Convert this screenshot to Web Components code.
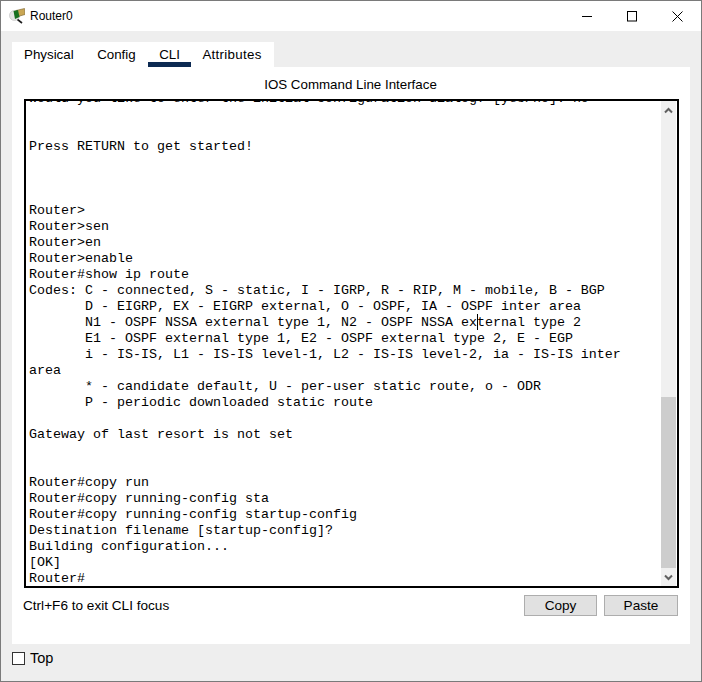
<!DOCTYPE html>
<html>
<head>
<meta charset="utf-8">
<title>Router0</title>
<style>
html, body { margin: 0; height: 100%; }
body { font-family: "Liberation Sans", Arial, sans-serif; overflow: hidden; }
</style>
</head>
<body>
<device-window title="Router0">
  <tab-bar active="CLI" tabs="Physical,Config,CLI,Attributes"></tab-bar>
  <cli-panel></cli-panel>
</device-window>
<script>
class WindowControls extends HTMLElement {
    constructor() {
        super();
        this.attachShadow({ mode: "open" }).innerHTML = `
            <style>
                :host { display: flex; margin-left: auto; margin-right: 18px; align-items: center; gap: 35px; }
                svg { display: block; }
            </style>
            <svg width="10" height="11" viewBox="0 0 10 11"><path d="M0 5.5H10" stroke="#000" fill="none"/></svg>
            <svg width="10" height="11" viewBox="0 0 10 11"><rect x=".5" y=".5" width="9" height="9.5" stroke="#000" fill="none"/></svg>
            <svg width="11" height="11" viewBox="0 0 11 11"><path d="M.5 .5L10.5 10.5M10.5 .5L.5 10.5" stroke="#000" fill="none" stroke-width="1"/></svg>
        `;
    }
}
customElements.define("window-controls", WindowControls);

class DeviceWindow extends HTMLElement {
    constructor() {
        super();
        this.root = this.attachShadow({ mode: "open" });
        this.root.innerHTML = `
            <style>
                :host { display: flex; flex-direction: column; box-sizing: border-box; width: 702px; height: 682px; border: 1px solid #7a7a7a; background: #eee; }
                #title { display: flex; align-items: center; height: 30px; background: #fff; padding-left: 8px; font-size: 12px; color: #000; flex: none; }
                #title svg.logo { margin-right: 5px; }
                #body { flex: none; padding: 11px 11px 0 11px; }
                #foot { display: flex; align-items: center; gap: 5px; padding: 8px 0 0 11px; font-size: 14.5px; line-height: 13px; color: #000; }
                #box { width: 11px; height: 11px; border: 1px solid #333; background: #fff; }
            </style>
            <div id="title">
                <svg class="logo" width="16" height="16" viewBox="0 0 16 16">
                    <circle cx="5.5" cy="7.5" r="5" fill="#e6e6e6" stroke="#c4c4c4" stroke-width=".7"/>
                    <path d="M8.5 11.5L13 15" stroke="#1c1c1c" stroke-width="1.6"/>
                    <path d="M7 2.5L15.5 .5L16 6.5L9 8.5z" fill="#c9a654" stroke="#77602c" stroke-width=".6"/>
                    <path d="M4.5 3L9 2L10.5 9L6 11z" fill="#17701f"/>
                </svg>
                <span class="t"></span>
            </div>
            <div id="body"><slot></slot></div>
            <div id="foot"><span id="box"></span><span>Top</span></div>
        `;
    }
    connectedCallback() {
        this.root.querySelector(".t").textContent = this.getAttribute("title");
        this.root.querySelector("#title").appendChild(document.createElement("window-controls"));
    }
}
customElements.define("device-window", DeviceWindow);

class TabBar extends HTMLElement {
    constructor() {
        super();
        this.root = this.attachShadow({ mode: "open" });
    }
    connectedCallback() {
        var active = this.getAttribute("active");
        var tabs = this.getAttribute("tabs").split(",");
        this.root.innerHTML = `
            <style>
                :host { display: flex; width: max-content; height: 25px; background: #fff; padding: 0 12px; gap: 23.5px; font-size: 13.33px; color: #000; }
                div { position: relative; line-height: 25px; }
                div:last-child { letter-spacing: .3px; margin-left: -1px; }
                div.on::after { content: ""; position: absolute; left: -11.5px; right: -11px; bottom: 0; height: 5px; background: #0c2a52; }
            </style>
            ${tabs.map(t => `<div class="${t == active ? "on" : ""}">${t}</div>`).join("")}
        `;
    }
}
customElements.define("tab-bar", TabBar);

class TermScroll extends HTMLElement {
    constructor() {
        super();
        this.attachShadow({ mode: "open" }).innerHTML = `
            <style>
                :host { display: flex; flex-direction: column; flex: none; width: 15px; margin-right: 1px; background: #f0f0f0; }
                .arrow { height: 18px; flex: none; display: flex; align-items: center; justify-content: center; }
                #track { flex: 1; display: flex; flex-direction: column; justify-content: flex-end; }
                #thumb { height: 171px; background: #cdcdcd; }
            </style>
            <div class="arrow"><svg width="9" height="7" viewBox="0 0 9 7"><path d="M1 5.5L4.5 2L8 5.5" stroke="#606060" stroke-width="2" fill="none"/></svg></div>
            <div id="track"><div id="thumb"></div></div>
            <div class="arrow"><svg width="9" height="7" viewBox="0 0 9 7"><path d="M1 1.5L4.5 5L8 1.5" stroke="#606060" stroke-width="2" fill="none"/></svg></div>
        `;
    }
}
customElements.define("term-scroll", TermScroll);

var TERMINAL_LINES = [
    "Would you like to enter the initial configuration dialog? [yes/no]: no",
    "", "",
    "Press RETURN to get started!",
    "", "", "",
    "Router>",
    "Router>sen",
    "Router>en",
    "Router>enable",
    "Router#show ip route",
    "Codes: C - connected, S - static, I - IGRP, R - RIP, M - mobile, B - BGP",
    "       D - EIGRP, EX - EIGRP external, O - OSPF, IA - OSPF inter area",
    "       N1 - OSPF NSSA external type 1, N2 - OSPF NSSA external type 2",
    "       E1 - OSPF external type 1, E2 - OSPF external type 2, E - EGP",
    "       i - IS-IS, L1 - IS-IS level-1, L2 - IS-IS level-2, ia - IS-IS inter",
    "area",
    "       * - candidate default, U - per-user static route, o - ODR",
    "       P - periodic downloaded static route",
    "",
    "Gateway of last resort is not set",
    "", "",
    "Router#copy run",
    "Router#copy running-config sta",
    "Router#copy running-config startup-config",
    "Destination filename [startup-config]?",
    "Building configuration...",
    "[OK]",
    "Router#"
];

class CliPanel extends HTMLElement {
    constructor() {
        super();
        this.root = this.attachShadow({ mode: "open" });
        this.root.innerHTML = `
            <style>
                :host { display: flex; flex-direction: column; height: 577px; box-sizing: border-box; background: #fff; padding: 0 11px 0 12px; color: #000; }
                #head { box-sizing: border-box; text-align: center; font-size: 13.33px; height: 32px; padding: 9px 2px 0 0; line-height: 18px; flex: none; }
                #term { position: relative; display: flex; height: 489px; box-sizing: border-box; border: 2px solid #000; flex: none; background: #fff; }
                #out { flex: 1; min-width: 0; display: flex; flex-direction: column; justify-content: flex-end; overflow: hidden; padding: 0 0 0 3px; font: 13.33px/16px "Liberation Mono", "Courier New", monospace; white-space: pre; }
                #out div { flex: none; height: 15px; padding-top: 1px; }
                #out div:last-child { height: 16px; padding-top: 1px; margin-bottom: -1px; }
                #beam { position: absolute; left: 451px; top: 213px; width: 1px; height: 16px; background: #000; }
                #row { display: flex; align-items: center; justify-content: space-between; padding: 7px 1px 0 0; font-size: 13.6px; margin-left: -1px; }
                #btns { display: flex; gap: 7px; }
                button { width: 73px; height: 21px; box-sizing: border-box; padding: 0; border: 1px solid #adadad; border-radius: 0; background: #e1e1e1; color: #000; font: 13.6px "Liberation Sans", Arial, sans-serif; }
                button + button { width: 74px; }
            </style>
            <div id="head">IOS Command Line Interface</div>
            <div id="term">
                <div id="out"></div>
                <term-scroll></term-scroll>
                <div id="beam"></div>
            </div>
            <div id="row">
                <span>Ctrl+F6 to exit CLI focus</span>
                <div id="btns"><button>Copy</button><button>Paste</button></div>
            </div>
        `;
        var out = this.root.querySelector("#out");
        TERMINAL_LINES.forEach(l => {
            var d = document.createElement("div");
            d.textContent = l || " ";
            out.appendChild(d);
        });
    }
}
customElements.define("cli-panel", CliPanel);
</script>
</body>
</html>
